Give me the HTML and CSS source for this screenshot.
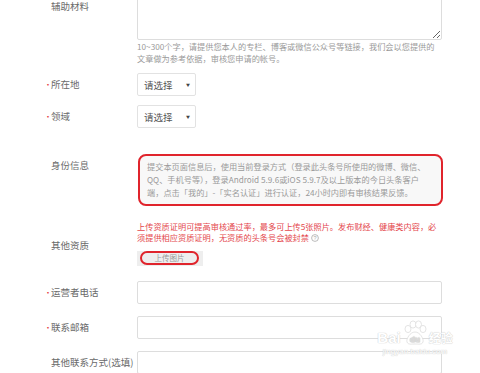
FILE: index.html
```html
<!DOCTYPE html>
<html lang="zh-CN">
<head>
  <meta charset="UTF-8">
  <title>头条号 - 账号信息</title>
  <meta name="viewport" content="width=device-width, initial-scale=1.0">
  <link rel="stylesheet" href="styles.css">
</head>
<body>

  <div class="form">
    <div class="row row-aux">
      <div class="label label-top">辅助材料</div>
      <div class="field">
        <textarea class="textarea"></textarea>
        <div class="hint">10~300个字，请提供您本人的专栏、博客或微信公众号等链接，我们会以您提供的<br>文章做为参考依据，审核您申请的帐号。</div>
      </div>
    </div>

    <div class="row row-select">
      <div class="label req">所在地</div>
      <div class="field">
        <div class="select"><span>请选择</span><span class="arrow">▼</span></div>
      </div>
    </div>

    <div class="row row-select2">
      <div class="label req">领域</div>
      <div class="field">
        <div class="select"><span>请选择</span><span class="arrow">▼</span></div>
      </div>
    </div>

    <div class="row row-id">
      <div class="label">身份信息</div>
      <div class="field">
        <div class="id-box">提交本页面信息后，使用当前登录方式（登录此头条号所使用的微博、微信、<br>QQ、手机号等），登录Android 5.9.6或iOS 5.9.7及以上版本的今日头条客户<br>端，点击「我的」-「实名认证」进行认证，24小时内即有审核结果反馈。</div>
      </div>
    </div>

    <div class="row row-qual">
      <div class="label label-qual">其他资质</div>
      <div class="field">
        <div class="warn">上传资质证明可提高审核通过率，最多可上传5张照片。发布财经、健康类内容，必<br>须提供相应资质证明，无资质的头条号会被封禁 <svg class="help" width="8" height="8" viewBox="0 0 8 8"><circle cx="4" cy="4" r="3.4" fill="none" stroke="#aaa" stroke-width="0.8"/><text x="4" y="6" font-size="5.5" text-anchor="middle" fill="#aaa" font-family="Liberation Sans, sans-serif">?</text></svg></div>
        <div class="upload"><span class="upload-btn">上传图片</span></div>
      </div>
    </div>

    <div class="row row-phone">
      <div class="label req">运营者电话</div>
      <div class="field"><div class="input"></div></div>
    </div>

    <div class="row row-mail">
      <div class="label req">联系邮箱</div>
      <div class="field"><div class="input"></div></div>
    </div>

    <div class="row row-other">
      <div class="label">其他联系方式(选填)</div>
      <div class="field"><div class="input"></div></div>
    </div>
  </div>

  <div class="watermark">
    <div class="wm-logo">
      <span>Bai</span>
      <svg width="26" height="26" viewBox="0 0 26 26">
        <g fill="#fff" stroke="#ddd" stroke-width="0.8">
          <ellipse cx="6" cy="9" rx="3" ry="3.6"/>
          <ellipse cx="11" cy="4.5" rx="3" ry="3.6"/>
          <ellipse cx="16.5" cy="4.5" rx="3" ry="3.6"/>
          <ellipse cx="21" cy="9" rx="3" ry="3.6"/>
          <path d="M13 12 C8 12 4 19 5 22 C6 25 10 24 13 24 C16 24 20 25 21 22 C22 19 18 12 13 12 Z"/>
        </g>
        <text x="13" y="22" font-size="8" text-anchor="middle" fill="#fff" stroke="#ddd" stroke-width="0.5" font-family="Liberation Sans, sans-serif" font-weight="bold">du</text>
      </svg>
      <span class="wm-cn">经验</span>
    </div>
    <div class="wm-url">jingyan.baidu.com</div>
  </div>

</body>
</html>
```

FILE: styles.css
```css
html, body {
  margin: 0;
  padding: 0;
  background: #fff;
  overflow: hidden;
}

body {
  font-family: "Noto Sans CJK SC", "Noto Sans", sans-serif;
  color: #666;
  position: relative;
  height: 373px;
}

.form {
  margin-top: -22px;
}

.row {
  display: flex;
  align-items: flex-start;
}

.label {
  width: 137px;
  box-sizing: border-box;
  padding-left: 51px;
  font-size: 9.5px;
  line-height: 23px;
  color: #6a6a6a;
  white-space: nowrap;
  flex-shrink: 0;
}

.label-top {
  padding-top: 21px;
  line-height: 14px;
}

.req::before {
  content: "•";
  display: inline-block;
  width: 7px;
  margin-left: -7px;
  font-size: 8px;
  color: #e4393c;
}

.field {
  width: 305px;
}

.textarea {
  display: block;
  width: 305px;
  height: 62px;
  box-sizing: border-box;
  margin: 0;
  border: 1px solid #ddd;
  border-radius: 2px;
  background: #fff;
  resize: vertical;
}

.hint {
  font-size: 8.2px;
  line-height: 12px;
  color: #9a9a9a;
  white-space: nowrap;
}

.row-select { margin-top: 9px; }
.row-select2 { margin-top: 9px; }

.select {
  width: 59px;
  height: 23px;
  box-sizing: border-box;
  border: 1px solid #e2e2e2;
  border-radius: 2px;
  display: flex;
  align-items: center;
  justify-content: space-between;
  padding: 0 5px 0 6px;
  font-size: 9.5px;
  color: #555;
}

.arrow {
  font-size: 4px;
  color: #444;
}

.row-id { margin-top: 26px; }

.id-box {
  width: 305px;
  box-sizing: border-box;
  margin-left: 1px;
  border: 2px solid #e0242c;
  border-radius: 8px;
  background: #f8f8f8;
  padding: 4px 4px 5px 7px;
  font-size: 8.2px;
  line-height: 13px;
  color: #9a9a9a;
  white-space: nowrap;
}

.row-qual { margin-top: 15px; }

.label-qual {
  padding-top: 17px;
  line-height: 14px;
}

.warn {
  font-size: 8.2px;
  line-height: 10.5px;
  color: #e4474d;
  white-space: nowrap;
}

.help {
  vertical-align: -1px;
}

.upload {
  display: inline-block;
  margin-top: 7px;
  background: #eee;
  padding: 0 4px 1px 3px;
}

.upload-btn {
  display: block;
  width: 59px;
  height: 14px;
  box-sizing: border-box;
  border: 2px solid #e0242c;
  border-radius: 8px;
  text-align: center;
  font-size: 7.5px;
  line-height: 10px;
  color: #999;
}

.row-phone { margin-top: 15px; }
.row-mail { margin-top: 12px; }
.row-other { margin-top: 12px; }

.input {
  width: 305px;
  height: 23px;
  box-sizing: border-box;
  border: 1px solid #ddd;
  border-radius: 2px;
  background: #fff;
}

.watermark {
  position: absolute;
  left: 370px;
  top: 320px;
  width: 90px;
  text-align: center;
  font-family: "Liberation Sans", sans-serif;
  color: #fff;
}

.wm-logo {
  display: flex;
  align-items: flex-end;
  justify-content: center;
  gap: 1px;
  font-size: 15px;
  font-weight: bold;
  line-height: 16px;
  text-shadow: 0 0 1px #ccc, 0 0 1px #ccc;
}

.wm-cn {
  font-family: "Noto Sans CJK SC", sans-serif;
  font-size: 12px;
}

.wm-url {
  font-size: 8px;
  line-height: 12px;
  text-shadow: 0 0 1px #ccc, 0 0 1px #ccc;
}
```
